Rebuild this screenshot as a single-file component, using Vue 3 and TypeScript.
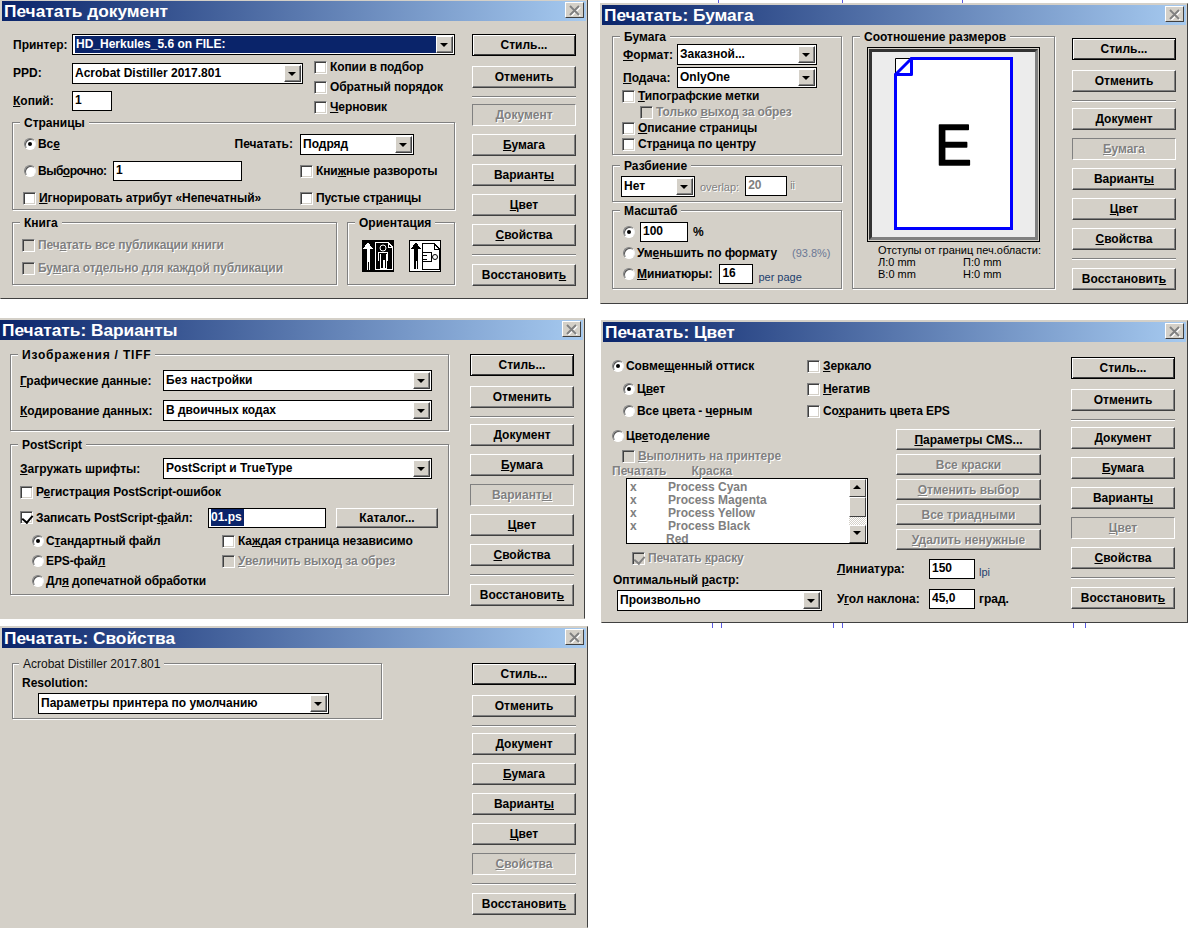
<template>
  <div class="desk">
    <i v-for="t in ticks" :key="t.x + '-' + t.y" class="tick" :style="{ left: t.x + 'px', top: t.y + 'px' }"></i>

    <section v-for="d in dialogs" :key="d.id" class="win" :class="d.id">
      <header class="title">
        <span>{{ d.title }}</span>
        <span class="close">
          <svg width="13" height="11" viewBox="0 0 13 11">
            <path d="M2 1l9 9M11 1l-9 9" stroke="#fff" stroke-width="2" transform="translate(1 1)" />
            <path d="M2 1l9 9M11 1l-9 9" stroke="#808080" stroke-width="2" />
          </svg>
        </span>
      </header>

      <div class="body">
        <!-- Печатать документ -->
        <div v-if="d.id === 'doc'" class="left">
          <div class="printer">
            <span>Принтер:</span>
            <div class="combo picked"><span>HD_Herkules_5.6 on FILE:</span><i class="arrow"></i></div>
          </div>
          <div class="doc-mid">
            <div class="doc-fields">
              <span>PPD:</span>
              <div class="combo"><span>Acrobat Distiller 2017.801</span><i class="arrow"></i></div>
              <span><u>К</u>опий:</span>
              <div class="field copies">1</div>
            </div>
            <div class="doc-checks">
              <label class="opt"><i class="check"></i>Копии в подбор</label>
              <label class="opt"><i class="check"></i>Обратный порядок</label>
              <label class="opt"><i class="check"></i><span><u>Ч</u>ерновик</span></label>
            </div>
          </div>
          <div class="group pages">
            <span class="legend">Страницы</span>
            <div class="pages-a">
              <label class="opt"><i class="radio on"></i><span>Вс<u>е</u></span></label>
              <span>Печатать:</span>
            </div>
            <div class="combo"><span>Подряд</span><i class="arrow"></i></div>
            <div class="pages-b">
              <label class="opt"><i class="radio"></i><span>Выб<u>о</u>рочно:</span></label>
              <div class="field range">1</div>
            </div>
            <label class="opt"><i class="check"></i><span>Кни<u>ж</u>ные развороты</span></label>
            <label class="opt"><i class="check"></i><span><u>И</u>гнорировать атрибут «Непечатный»</span></label>
            <label class="opt"><i class="check"></i><span>Пустые ст<u>р</u>аницы</span></label>
          </div>
          <div class="doc-bottom">
            <div class="group book">
              <span class="legend">Книга</span>
              <label class="opt off"><i class="check dis"></i><span>Печ<u>а</u>тать все публикации книги</span></label>
              <label class="opt off"><i class="check dis"></i><span>Бу<u>м</u>ага отдельно для каждой публикации</span></label>
            </div>
            <div class="group orient">
              <span class="legend">Ориентация</span>
              <svg width="32" height="32" viewBox="0 0 32 32" shape-rendering="crispEdges">
                <rect width="32" height="32" fill="#000" />
                <path d="M6 2l5 7H8v21H5V9H1z" fill="#fff" />
                <path d="M6 22v8" stroke="#000" stroke-width="1" />
                <path d="M13.5 2.5H26l4.5 4.5v22.500H13.500z" fill="none" stroke="#fff" />
                <path d="M26 2.500v5h4.500" fill="none" stroke="#fff" />
                <circle cx="21" cy="8" r="3" fill="none" stroke="#fff" shape-rendering="auto" />
                <path d="M16.500 20.500v-8h9v8M18.500 14v14.500h2.500v-8h1v8h2.500V14" fill="none" stroke="#fff" />
              </svg>
              <svg width="32" height="32" viewBox="0 0 32 32" shape-rendering="crispEdges">
                <rect x=".5" y=".5" width="31" height="31" fill="#fff" stroke="#000" />
                <path d="M7 2l5 7H9v20H5V9H2z" fill="#000" />
                <path d="M7 21v8" stroke="#fff" stroke-width="1" />
                <path d="M13.500 3.500H25l5.500 5.500v20.500H13.500z" fill="none" stroke="#000" />
                <path d="M25 3.500v5.500h5.500" fill="none" stroke="#000" />
                <path d="M13.500 12.500h9v9h-9M17.500 15h-4M17.500 19h-4" fill="none" stroke="#000" />
                <circle cx="26" cy="17" r="2.500" fill="none" stroke="#000" shape-rendering="auto" />
              </svg>
            </div>
          </div>
        </div>

        <!-- Печатать: Бумага -->
        <div v-else-if="d.id === 'paper'" class="left">
          <div class="paper-a">
            <div class="group sheet">
              <span class="legend">Бумага</span>
              <div class="sheet-fields">
                <span><u>Ф</u>ормат:</span>
                <div class="combo"><span>Заказной...</span><i class="arrow"></i></div>
                <span><u>П</u>одача:</span>
                <div class="combo"><span>OnlyOne</span><i class="arrow"></i></div>
              </div>
              <label class="opt"><i class="check"></i><span><u>Т</u>ипографские метки</span></label>
              <label class="opt off sub"><i class="check dis"></i><span>Только <u>в</u>ыход за обрез</span></label>
              <label class="opt"><i class="check"></i><span><u>О</u>писание страницы</span></label>
              <label class="opt"><i class="check"></i><span>Стр<u>а</u>ница по центру</span></label>
            </div>
            <div class="group tile">
              <span class="legend">Разбиение</span>
              <div class="combo"><span>Нет</span><i class="arrow"></i></div>
              <span class="thin gray overlap">overlap:</span>
              <div class="field dim">20</div>
              <span class="thin gray">ii</span>
            </div>
            <div class="group scale">
              <span class="legend">Масштаб</span>
              <div class="scale-row">
                <label class="opt"><i class="radio on"></i></label>
                <div class="field pct">100</div>
                <span>%</span>
              </div>
              <div class="scale-row">
                <label class="opt"><i class="radio"></i><span>Ум<u>е</u>ньшить по формату</span></label>
                <span class="thin fit">(93.8%)</span>
              </div>
              <div class="scale-row">
                <label class="opt"><i class="radio"></i><span><u>М</u>иниатюры:</span></label>
                <div class="field thumbs">16</div>
                <span class="thin per">per page</span>
              </div>
            </div>
          </div>
          <div class="group ratio">
            <span class="legend">Соотношение размеров</span>
            <div class="preview">
              <svg width="163" height="185" viewBox="0 0 163 185">
                <rect width="163" height="185" fill="#ececec" />
                <path d="M39.500 6.500H139.500V176.500H23.500V22.500z" fill="#fff" stroke="#0000ff" stroke-width="3" />
                <path d="M23.500 6.500H39.500L23.500 22.500z" fill="#fff" stroke="#000" stroke-width="1" />
                <path d="M39.500 6.500V22.500H23.500z" fill="#fff" stroke="#0000ff" stroke-width="3" stroke-linejoin="round" />
                <text transform="translate(63 113) scale(.95 1)" class="big-e">E</text>
              </svg>
            </div>
            <div class="margins">
              <span class="margins-head">Отступы от границ печ.области:</span>
              <span>Л:0 mm</span><span>П:0 mm</span>
              <span>B:0 mm</span><span>H:0 mm</span>
            </div>
          </div>
        </div>

        <!-- Печатать: Варианты -->
        <div v-else-if="d.id === 'opts'" class="left">
          <div class="group images">
            <span class="legend">Изображения / TIFF</span>
            <div class="opts-fields">
              <span><u>Г</u>рафические данные:</span>
              <div class="combo"><span>Без настройки</span><i class="arrow"></i></div>
              <span><u>К</u>одирование данных:</span>
              <div class="combo"><span>В двоичных кодах</span><i class="arrow"></i></div>
            </div>
          </div>
          <div class="group ps">
            <span class="legend">PostScript</span>
            <div class="opts-fields">
              <span><u>З</u>агружать шрифты:</span>
              <div class="combo"><span>PostScript и TrueType</span><i class="arrow"></i></div>
            </div>
            <label class="opt ps-log"><i class="check"></i><span>Р<u>е</u>гистрация PostScript-ошибок</span></label>
            <div class="ps-file">
              <label class="opt"><i class="check on"></i><span>Записать PostScript-<u>ф</u>айл:</span></label>
              <div class="field name"><span class="sel">01.ps</span></div>
              <button class="btn catalog">Каталог...</button>
            </div>
            <div class="ps-modes">
              <label class="opt"><i class="radio on"></i><span>С<u>т</u>андартный файл</span></label>
              <label class="opt"><i class="check"></i><span>Ка<u>ж</u>дая страница независимо</span></label>
              <label class="opt"><i class="radio"></i><span>EPS-фай<u>л</u></span></label>
              <label class="opt off"><i class="check dis"></i><span><u>У</u>величить выход за обрез</span></label>
              <label class="opt"><i class="radio"></i><span>Дл<u>я</u> допечатной обработки</span></label>
            </div>
          </div>
        </div>

        <!-- Печатать: Цвет -->
        <div v-else-if="d.id === 'color'" class="left">
          <div class="color-top">
            <label class="opt"><i class="radio on"></i><span>Совме<u>щ</u>енный оттиск</span></label>
            <label class="opt"><i class="check"></i><span><u>З</u>еркало</span></label>
            <label class="opt nest"><i class="radio on"></i><span>Ц<u>в</u>ет</span></label>
            <label class="opt"><i class="check"></i><span><u>Н</u>егатив</span></label>
            <label class="opt nest"><i class="radio"></i><span>Все цвета - <u>ч</u>ерным</span></label>
            <label class="opt"><i class="check"></i><span>Со<u>х</u>ранить цвета EPS</span></label>
          </div>
          <div class="color-low">
            <div class="seps">
              <label class="opt sep-head"><i class="radio"></i><span>Цв<u>е</u>тоделение</span></label>
              <label class="opt off run"><i class="check dis"></i><span><u>В</u>ыполнить на принтере</span></label>
              <div class="ink-head off-text"><span>Печатать</span><span>Краска</span></div>
              <div class="inks">
                <div class="ink-rows">
                  <div v-for="ink in inks" :key="ink.name" class="ink">
                    <span class="ink-x">{{ ink.mark }}</span><span :class="{ plain: !ink.mark }">{{ ink.name }}</span>
                  </div>
                </div>
                <div class="scroll">
                  <i class="scroll-btn up"></i>
                  <i class="scroll-thumb"></i>
                  <i class="scroll-track"></i>
                  <i class="scroll-btn down"></i>
                </div>
              </div>
              <label class="opt off print-ink"><i class="check dis on"></i><span>Печатать <u>к</u>раску</span></label>
              <div class="screen-lbl">Оптимальный <u>р</u>астр:</div>
              <div class="combo screen"><span>Произвольно</span><i class="arrow"></i></div>
            </div>
            <div class="cms">
              <button class="btn wide"><span><u>П</u>араметры CMS...</span></button>
              <button class="btn wide dim-text"><span>Все краски</span></button>
              <button class="btn wide dim-text"><span><u>О</u>тменить выбор</span></button>
              <button class="btn wide dim-text"><span>Все триадными</span></button>
              <button class="btn wide dim-text"><span><u>У</u>далить ненужные</span></button>
              <div class="freq first">
                <span><u>Л</u>иниатура:</span>
                <div class="field num">150</div>
                <span class="thin per">lpi</span>
              </div>
              <div class="freq">
                <span>У<u>г</u>ол наклона:</span>
                <div class="field num">45,0</div>
                <span>град.</span>
              </div>
            </div>
          </div>
        </div>

        <!-- Печатать: Свойства -->
        <div v-else class="left">
          <div class="group res">
            <span class="legend soft">Acrobat Distiller 2017.801</span>
            <div class="res-lbl">Resolution:</div>
            <div class="combo"><span>Параметры принтера по умолчанию</span><i class="arrow"></i></div>
          </div>
        </div>

        <nav class="btns">
          <template v-for="b in nav" :key="b.a + b.u">
            <hr v-if="b.rule" class="rule" />
            <button class="btn" :class="{ main: b.a === 'Стиль...', pressed: b.key === d.id }">
              <span>{{ b.a }}<u>{{ b.u }}</u>{{ b.c }}</span>
            </button>
          </template>
        </nav>
      </div>
    </section>
  </div>
</template>

<script setup lang="ts">
interface Dialog {
  id: string;
  title: string;
}

interface NavButton {
  a: string;
  u: string;
  c: string;
  key?: string;
  rule?: boolean;
}

const dialogs: Dialog[] = [
  { id: 'doc', title: 'Печатать документ' },
  { id: 'paper', title: 'Печатать: Бумага' },
  { id: 'opts', title: 'Печатать: Варианты' },
  { id: 'color', title: 'Печатать: Цвет' },
  { id: 'props', title: 'Печатать: Свойства' },
];

const nav: NavButton[] = [
  { a: 'Стиль...', u: '', c: '' },
  { a: 'Отменить', u: '', c: '' },
  { a: '', u: 'Д', c: 'окумент', key: 'doc', rule: true },
  { a: '', u: 'Б', c: 'умага', key: 'paper' },
  { a: 'Вариант', u: 'ы', c: '', key: 'opts' },
  { a: '', u: 'Ц', c: 'вет', key: 'color' },
  { a: '', u: 'С', c: 'войства', key: 'props' },
  { a: 'Восстановит', u: 'ь', c: '', rule: true },
];

const inks = [
  { mark: 'x', name: 'Process Cyan' },
  { mark: 'x', name: 'Process Magenta' },
  { mark: 'x', name: 'Process Yellow' },
  { mark: 'x', name: 'Process Black' },
  { mark: '', name: 'Red' },
];

// crop marks of the page behind the dialogs
const ticks = [
  { x: 718, y: 0 },
  { x: 842, y: 0 },
  { x: 962, y: 0 },
  { x: 712, y: 623 },
  { x: 721, y: 623 },
  { x: 833, y: 623 },
  { x: 842, y: 623 },
  { x: 1073, y: 623 },
  { x: 1085, y: 623 },
];
</script>

<style scoped>
.desk {
  position: relative;
  width: 1188px;
  height: 939px;
  overflow: hidden;
  background: #fff;
  font: bold 12px "Liberation Sans", Arial, sans-serif;
  color: #000;
}

.desk * {
  box-sizing: border-box;
}

.tick {
  position: absolute;
  width: 1px;
  height: 5px;
  background: #5a5ae0;
}

.win {
  position: absolute;
  padding: 1px;
  background: #d4d0c8;
  border: 1px solid;
  border-color: #d4d0c8 #404040 #404040 #d4d0c8;
}

.doc { left: 0; top: -1px; width: 588px; height: 300px; }
.paper { left: 600px; top: 3px; width: 588px; height: 301px; }
.opts { left: -2px; top: 318px; width: 587px; height: 301px; border-bottom-color: #d4d0c8; }
.color { left: 601px; top: 320px; width: 587px; height: 303px; }
.props { left: 0; top: 626px; width: 588px; height: 302px; border-bottom-color: #d4d0c8; }

.title {
  position: relative;
  display: flex;
  align-items: center;
  height: 20px;
  padding-left: 2px;
  background: linear-gradient(90deg, #0a246a, #a6caf0);
  color: #fff;
  font-size: 17.3px;
  white-space: nowrap;
}

.close {
  position: absolute;
  right: 2px;
  top: 1px;
  display: flex;
  align-items: center;
  justify-content: center;
  width: 19px;
  height: 16px;
  background: #d4d0c8;
  border: 1px solid;
  border-color: #fff #404040 #404040 #fff;
}

.body {
  display: flex;
  justify-content: space-between;
  align-items: flex-start;
  padding: 13px 10px 0;
}

.opts .body { padding: 14px 9px 0 10px; }
.color .body { padding: 15px 11px 0 9px; }
.props .body { padding: 15px 10px 0; }

.left {
  width: 443px;
  white-space: nowrap;
}

.opts .left { width: 439px; }
.color .left { width: 429px; margin-top: -1px; }
.paper .left { display: flex; gap: 10px; margin-top: -2px; }
.props .left { width: 370px; }

/* --- push buttons --- */
.btns {
  display: flex;
  flex-direction: column;
  width: 104px;
  gap: 8px;
}

.btn {
  display: flex;
  align-items: center;
  justify-content: center;
  width: 104px;
  height: 22px;
  padding: 0;
  background: #d4d0c8;
  border: 1px solid;
  border-color: #fff #404040 #404040 #fff;
  box-shadow: inset -1px -1px 0 #808080;
  font: inherit;
  color: #000;
}

.btn.main {
  margin-bottom: 2px;
  border: 1px solid #000;
  box-shadow: inset 1px 1px 0 #fff, inset -1px -1px 0 #404040;
}

.btn.pressed {
  border-color: #808080 #fff #fff #808080;
  box-shadow: none;
  color: #808080;
  text-shadow: 1px 1px 0 #fff;
}

.rule {
  width: 100%;
  height: 2px;
  margin: 0;
  border: 0;
  border-top: 1px solid #808080;
  border-bottom: 1px solid #fff;
}

.rule:first-of-type {
  margin-bottom: -2px;
}

.dim-text {
  color: #808080;
  text-shadow: 1px 1px 0 #fff;
}

/* --- generic controls --- */
.group {
  position: relative;
  border: 1px solid #808080;
  box-shadow: inset 1px 1px 0 #fff, 1px 1px 0 #fff;
}

.legend {
  position: absolute;
  top: -7px;
  left: 7px;
  padding: 0 4px;
  background: #d4d0c8;
  line-height: 15px;
}

.legend.soft {
  left: 6px;
  font-weight: normal;
  color: #111;
}

.images .legend {
  letter-spacing: 0.8px;
}

.opt {
  display: flex;
  align-items: center;
  gap: 3px;
  height: 14px;
  letter-spacing: -0.1px;
}

.opt.off,
.off-text {
  color: #808080;
  text-shadow: 1px 1px 0 #fff;
}

.check {
  position: relative;
  flex: none;
  width: 13px;
  height: 13px;
  background: #fff;
  border: 1px solid;
  border-color: #808080 #fff #fff #808080;
  box-shadow: inset 1px 1px 0 #404040, inset -1px -1px 0 #d4d0c8;
}

.check.dis {
  background: #d4d0c8;
}

.check.on::after {
  content: "";
  position: absolute;
  left: 3px;
  top: 1px;
  width: 5px;
  height: 8px;
  border: solid #000;
  border-width: 0 2px 2px 0;
  transform: rotate(40deg);
}

.check.dis.on::after {
  border-color: #808080;
}

.radio {
  position: relative;
  flex: none;
  width: 12px;
  height: 12px;
  border-radius: 50%;
  background: #fff;
  border: 1px solid;
  border-color: #808080 #f2f2f2 #fff #808080;
  box-shadow: inset 1px 1px 0 #555;
  margin-right: -1px;
}

.radio.on::after {
  content: "";
  position: absolute;
  left: 3px;
  top: 3px;
  width: 4px;
  height: 4px;
  border-radius: 50%;
  background: #000;
}

.field {
  height: 20px;
  padding: 0 2px;
  background: #fff;
  border: 1px solid #000;
  line-height: 17px;
}

.field.dim {
  width: 42px;
  color: #808080;
}

.combo {
  display: flex;
  align-items: center;
  height: 21px;
  padding: 1px 1px 1px 2px;
  background: #fff;
  border: 1px solid #000;
  overflow: hidden;
}

.combo > span {
  flex: 1;
  line-height: 17px;
}

.arrow {
  position: relative;
  flex: none;
  width: 17px;
  height: 17px;
  background: #d4d0c8;
  border: 1px solid;
  border-color: #fff #404040 #404040 #fff;
  box-shadow: inset -1px -1px 0 #808080;
}

.arrow::after {
  content: "";
  position: absolute;
  left: 3px;
  top: 6px;
  border: 4px solid transparent;
  border-top: 4px solid #000;
  border-bottom: 0;
}

.picked > span {
  height: 17px;
  padding-left: 1px;
  background: #0a246a;
  color: #fff;
}

.sel {
  display: inline-block;
  padding-right: 2px;
  background: #0a246a;
  color: #fff;
}

.thin {
  font-weight: normal;
  font-size: 11px;
}

.gray {
  color: #808080;
  text-shadow: 1px 1px 0 #fff;
}

/* --- Печатать документ --- */
.printer {
  display: grid;
  grid-template-columns: 60px 1fr;
  align-items: center;
  padding-left: 1px;
}

.printer .combo {
  margin-left: -1px;
}

.doc-mid {
  display: flex;
  height: 48px;
  margin-top: 8px;
}

.doc-fields {
  display: grid;
  grid-template-columns: 60px 231px;
  grid-template-rows: 20px 20px;
  align-items: center;
  row-gap: 8px;
}

.doc-fields > span {
  padding-left: 1px;
}

.copies {
  width: 40px;
}

.doc-checks {
  display: flex;
  flex-direction: column;
  gap: 6px;
  margin: -3px 0 0 11px;
}

.pages {
  display: grid;
  grid-template-columns: 277px 114px;
  grid-template-rows: 20px 20px 20px;
  align-items: center;
  row-gap: 7px;
  height: 88px;
  margin-top: 11px;
  padding: 11px 0 0 10px;
}

.pages-a {
  display: flex;
  justify-content: space-between;
  align-items: center;
  padding: 0 7px 0 1px;
}

.pages-b {
  display: flex;
  align-items: center;
  padding-left: 1px;
}

.pages-b .opt {
  width: 89px;
  letter-spacing: -0.5px;
}

.range {
  width: 129px;
}

.doc-bottom {
  display: flex;
  gap: 10px;
  margin-top: 12px;
}

.book {
  display: flex;
  flex-direction: column;
  gap: 9px;
  width: 325px;
  height: 63px;
  padding: 15px 0 0 9px;
}

.orient {
  display: flex;
  gap: 15px;
  width: 108px;
  height: 63px;
  padding: 17px 0 0 14px;
}

/* --- Печатать: Бумага --- */
.paper-a {
  display: flex;
  flex-direction: column;
  width: 230px;
}

.sheet {
  height: 119px;
  padding: 7px 0 0 9px;
}

.sheet .opt {
  height: 16px;
}

.sheet-fields {
  display: grid;
  grid-template-columns: 54px 140px;
  grid-template-rows: 21px 21px;
  align-items: center;
  row-gap: 2px;
  padding-left: 1px;
}

.sub {
  margin-left: 18px;
}

.tile {
  display: flex;
  align-items: flex-start;
  height: 37px;
  margin-top: 10px;
  padding: 10px 0 0 8px;
}

.tile .combo {
  width: 74px;
}

.overlap {
  margin: 2px 6px 0 5px;
}

.tile .thin {
  line-height: 18px;
}

.tile .field + .thin {
  margin-left: 3px;
}

.scale {
  display: flex;
  flex-direction: column;
  gap: 1px;
  height: 79px;
  margin-top: 8px;
  padding: 11px 0 0 10px;
}

.scale-row {
  display: flex;
  align-items: center;
  height: 20px;
}

.pct {
  width: 48px;
  margin: 0 5px 0 6px;
}

.fit {
  margin-left: 15px;
  color: #6b7895;
}

.thumbs {
  width: 34px;
  margin: 0 5px 0 7px;
}

.per {
  color: #23406e;
  align-self: flex-end;
  line-height: 14px;
}

.ratio {
  width: 203px;
  height: 253px;
  padding: 10px 0 0 14px;
}

.preview {
  width: 173px;
  height: 195px;
  padding: 1px;
  background: #d4d0c8;
  border: 1px solid #000;
}

.preview svg {
  display: block;
  box-sizing: content-box;
  border: 3px solid;
  border-color: #333 #808080 #808080 #333;
}

.big-e {
  font: normal 58px "Liberation Sans", Arial, sans-serif;
  fill: #000;
  stroke: #000;
  stroke-width: 1.6;
  stroke-linejoin: round;
}

.margins {
  display: grid;
  grid-template-columns: 85px 1fr;
  grid-auto-rows: 12px;
  margin: 2px 0 0 11px;
  font: normal 11px/12px "Liberation Sans", Arial, sans-serif;
}

.margins-head {
  grid-column: 1 / 3;
}

/* --- Печатать: Варианты --- */
.images {
  height: 77px;
  padding: 15px 0 0 9px;
}

.opts-fields {
  display: grid;
  grid-template-columns: 143px 269px;
  grid-auto-rows: 21px;
  align-items: center;
  row-gap: 9px;
}

.ps {
  height: 151px;
  margin-top: 13px;
  padding: 13px 0 0 9px;
}

.ps-log {
  margin-top: 6px;
}

.ps-file {
  display: flex;
  align-items: center;
  height: 21px;
  margin-top: 8px;
}

.ps-file .opt {
  width: 188px;
}

.name {
  width: 118px;
}

.catalog {
  width: 102px;
  height: 20px;
  margin-left: 10px;
}

.ps-modes {
  display: grid;
  grid-template-columns: 190px 1fr;
  grid-auto-rows: 20px;
  align-items: center;
  margin: 3px 0 0 12px;
}

/* --- Печатать: Цвет --- */
.color-top {
  display: grid;
  grid-template-columns: 195px 1fr;
  grid-template-rows: 23px 22px 25px;
  align-items: start;
}

.color-top .opt {
  height: 20px;
}

.nest {
  margin-left: 11px;
}

.color-low {
  display: flex;
}

.seps {
  width: 284px;
}

.sep-head {
  height: 20px;
}

.run {
  margin: 3px 0 0 10px;
}

.ink-head {
  display: flex;
  gap: 25px;
  height: 13px;
  margin-top: 2px;
  line-height: 13px;
}

.inks {
  display: flex;
  justify-content: space-between;
  width: 242px;
  height: 66px;
  margin-left: 14px;
  background: #fff;
  border: 1px solid #000;
}

.ink-rows {
  padding: 2px 0 0 3px;
  color: #808080;
}

.ink {
  display: flex;
  height: 13px;
  line-height: 13px;
}

.ink-x {
  width: 38px;
}

.plain {
  margin-left: -2px;
}

.scroll {
  display: flex;
  flex-direction: column;
  width: 17px;
  margin-right: 1px;
}

.scroll-btn {
  position: relative;
  display: block;
  height: 18px;
  background: #d4d0c8;
  border: 1px solid;
  border-color: #fff #404040 #404040 #fff;
}

.scroll-btn::after {
  content: "";
  position: absolute;
  left: 3px;
  top: 5px;
  border: 4px solid transparent;
}

.scroll-btn.up::after {
  border-bottom: 4px solid #000;
  border-top: 0;
}

.scroll-btn.down::after {
  border-top: 4px solid #000;
  border-bottom: 0;
}

.scroll-thumb {
  display: block;
  height: 20px;
  background: #d4d0c8;
  border: 1px solid;
  border-color: #fff #404040 #404040 #fff;
}

.scroll-track {
  display: block;
  flex: 1;
  background: repeating-conic-gradient(#d4d0c8 0 25%, #fff 0 50%) 0 0 / 2px 2px;
}

.print-ink {
  margin: 7px 0 0 20px;
}

.screen-lbl {
  height: 14px;
  margin: 8px 0 0 1px;
  line-height: 14px;
}

.screen {
  width: 205px;
  margin: 3px 0 0 5px;
}

.cms {
  display: flex;
  flex-direction: column;
  gap: 4px;
  margin-top: 3px;
}

.btn.wide {
  width: 145px;
  height: 21px;
}

.freq {
  display: grid;
  grid-template-columns: 92px 46px auto;
  align-items: center;
  column-gap: 0;
  width: 204px;
  height: 20px;
  margin: 6px 0 0 -59px;
}

.freq.first {
  margin-top: 5px;
}

.freq > :last-child {
  margin-left: 4px;
}

/* --- Печатать: Свойства --- */
.res {
  height: 56px;
  padding: 12px 0 0 9px;
}

.res-lbl {
  height: 16px;
  line-height: 14px;
}

.res .combo {
  width: 291px;
  margin: 1px 0 0 16px;
}
</style>

<style>
body {
  margin: 0;
  background: #fff;
}
</style>
